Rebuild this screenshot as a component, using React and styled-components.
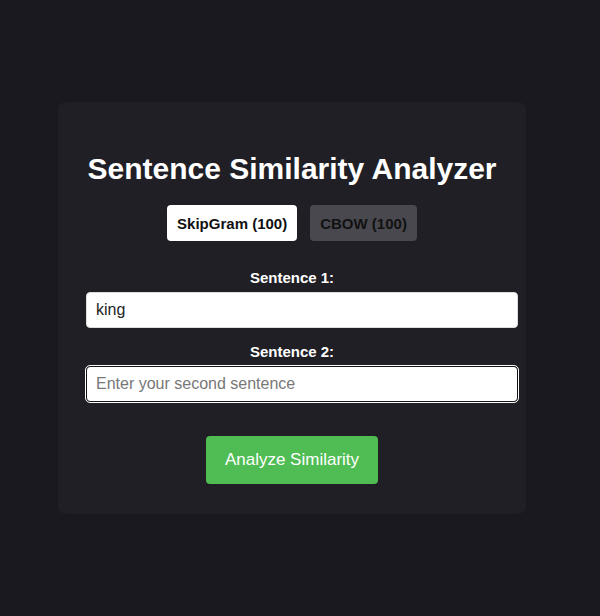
import React from 'react';
import styled, { createGlobalStyle } from 'styled-components';

const GlobalStyle = createGlobalStyle`
  html, body {
    margin: 0;
    padding: 0;
    background: #1a1920;
    font-family: "Liberation Sans", Arial, sans-serif;
  }
`;

const App = () => {
  const models = [
    { name: 'SkipGram', size: 100, active: true },
    { name: 'CBOW', size: 100, active: false },
  ];

  return (
    <>
      <GlobalStyle />
      <Page>
        <Card>
          <Title>Sentence Similarity Analyzer</Title>
          <ModelRow>
            {models.map((m) => (
              <ModelButton key={m.name} $active={m.active}>
                {m.name} ({m.size})
              </ModelButton>
            ))}
          </ModelRow>
          <Field>
            <Label>Sentence 1:</Label>
            <Input defaultValue="king" />
          </Field>
          <Field $second>
            <Label>Sentence 2:</Label>
            <Input $focused placeholder="Enter your second sentence" />
          </Field>
          <AnalyzeButton>Analyze Similarity</AnalyzeButton>
        </Card>
      </Page>
    </>
  );
};

export default App;

// Styled Components
const Page = styled.div`
  height: 616px;
  display: flex;
  align-items: center;
  justify-content: center;
  padding-right: 16px;
  box-sizing: border-box;
`;

const Card = styled.div`
  width: 412px;
  padding: 28px 28px 30px;
  background: #201f26;
  border-radius: 8px;
  display: flex;
  flex-direction: column;
  align-items: center;
`;

const Title = styled.h1`
  margin: 21px 0 0;
  font-size: 30px;
  line-height: 36px;
  font-weight: 700;
  color: #ffffff;
  white-space: nowrap;
`;

const ModelRow = styled.div`
  display: flex;
  gap: 13px;
  margin-top: 18px;
`;

const ModelButton = styled.button`
  height: 36px;
  padding: 0 10px;
  border: none;
  border-radius: 4px;
  font-family: inherit;
  font-size: 15px;
  font-weight: 700;
  color: #111;
  background: ${(p) => (p.$active ? '#ffffff' : '#49484e')};
  cursor: pointer;
`;

const Field = styled.div`
  align-self: stretch;
  display: flex;
  flex-direction: column;
  align-items: center;
  margin-top: ${(p) => (p.$second ? '15px' : '28px')};
`;

const Label = styled.label`
  font-size: 15px;
  line-height: 18px;
  font-weight: 700;
  color: #ffffff;
  margin-bottom: 5px;
`;

const Input = styled.input`
  align-self: flex-start;
  box-sizing: content-box;
  width: 100%;
  height: 18px;
  padding: 8px 9px;
  border: 1px solid ${(p) => (p.$focused ? '#111' : '#ddd')};
  border-radius: 4px;
  font-family: inherit;
  font-size: 16px;
  color: #222;
  background: #ffffff;
  outline: ${(p) => (p.$focused ? '1px solid #ffffff' : 'none')};
  outline-offset: 0;

  &::placeholder {
    color: #777;
  }
`;

const AnalyzeButton = styled.button`
  margin-top: 34px;
  height: 48px;
  padding: 0 19px;
  border: none;
  border-radius: 4px;
  background: #4fbd54;
  color: #ffffff;
  font-family: inherit;
  font-size: 17px;
  cursor: pointer;
`;
